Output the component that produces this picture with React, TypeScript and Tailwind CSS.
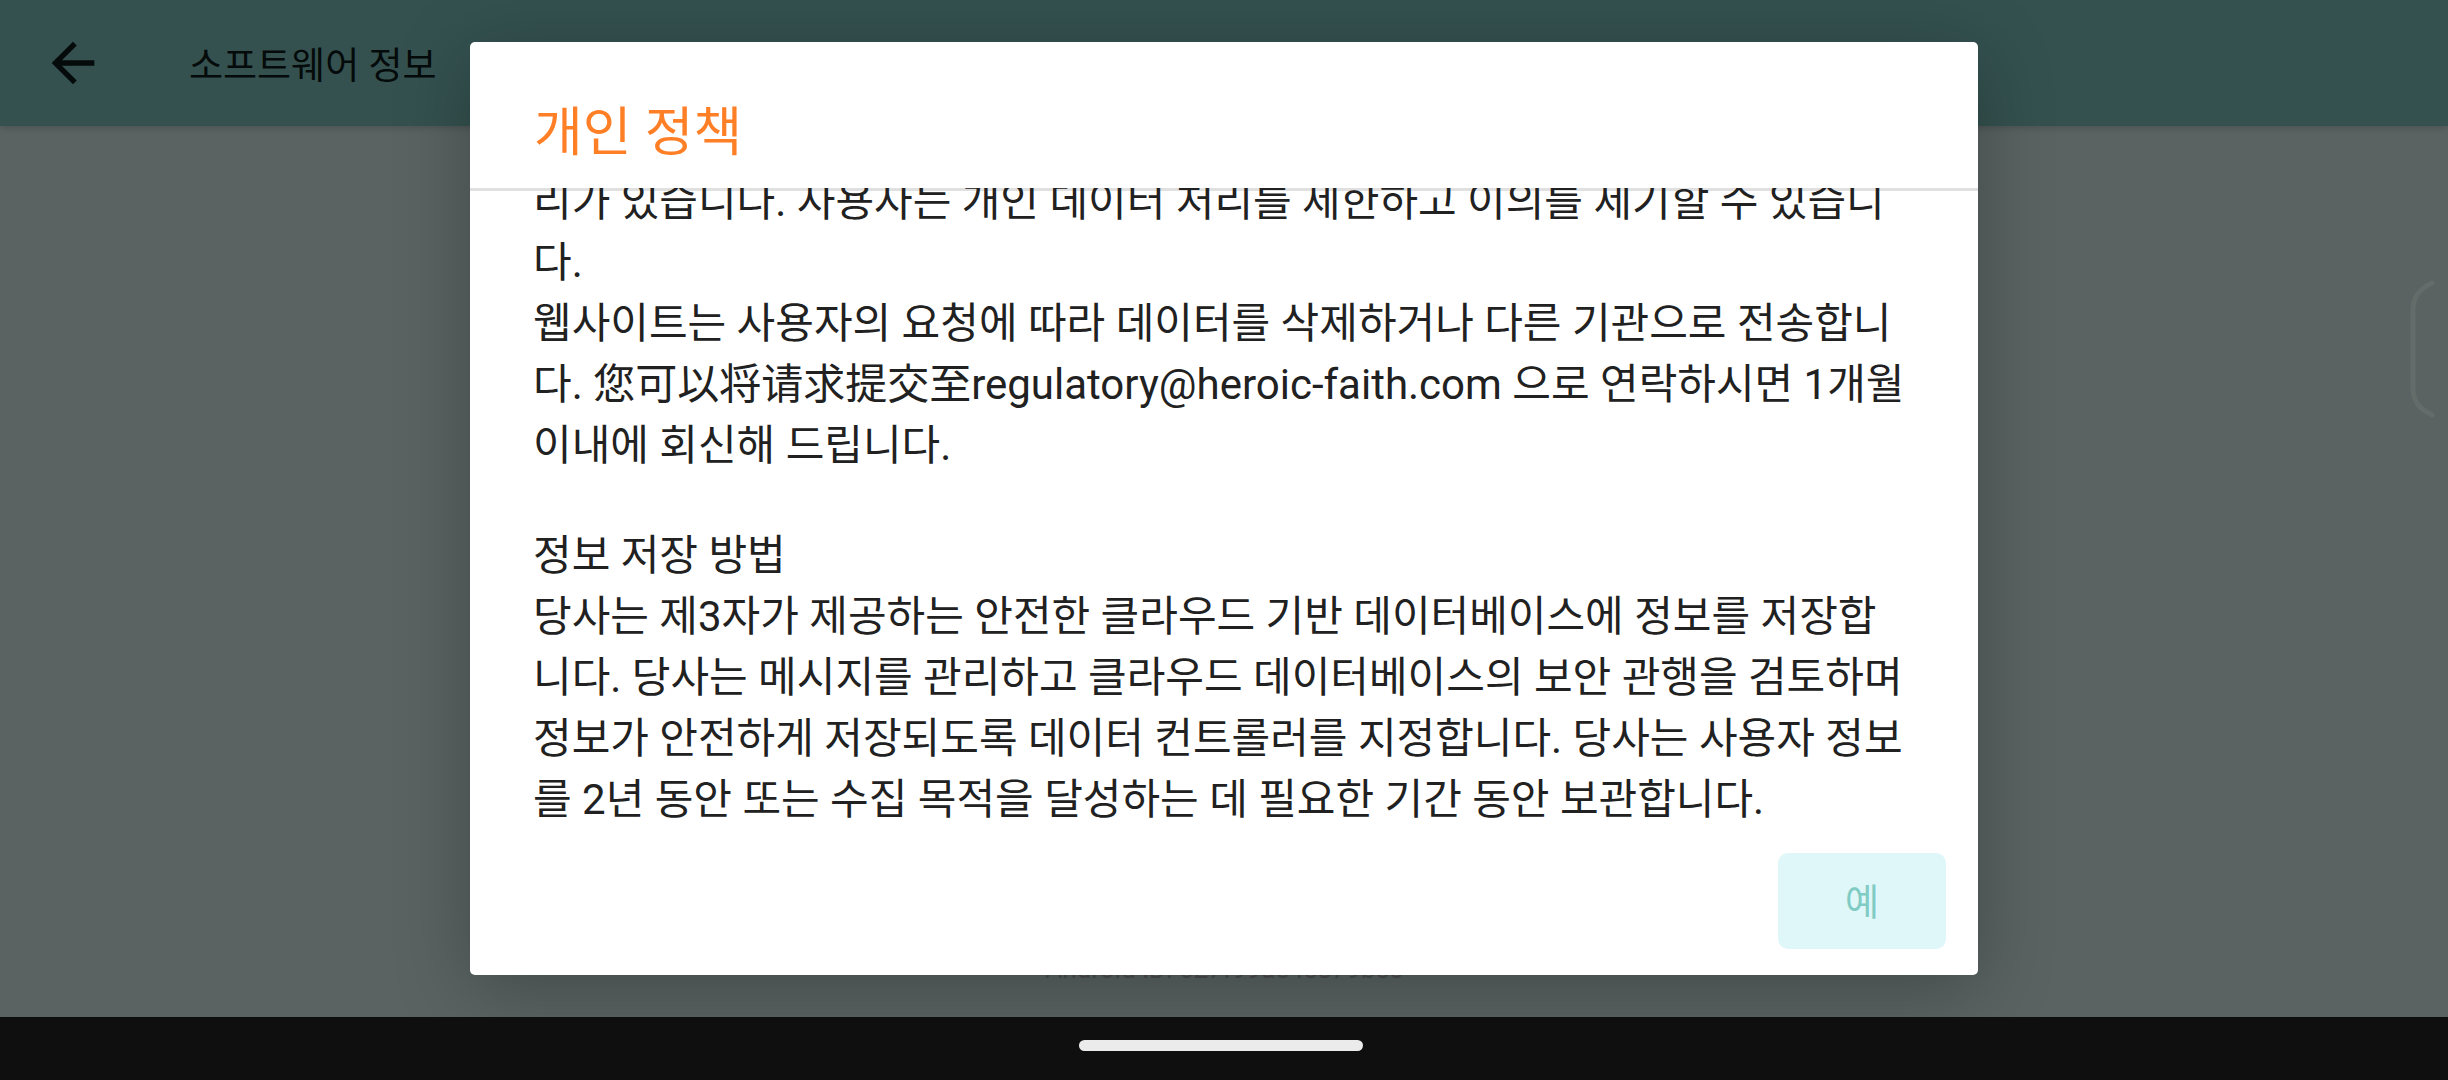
import React from "react";

const paragraphs = [
  "리가 있습니다. 사용자는 개인 데이터 처리를 제한하고 이의를 제기할 수 있습니다.",
  "웹사이트는 사용자의 요청에 따라 데이터를 삭제하거나 다른 기관으로 전송합니다. 您可以将请求提交至regulatory@heroic-faith.com 으로 연락하시면 1개월 이내에 회신해 드립니다.",
];

const storage =
  "당사는 제3자가 제공하는 안전한 클라우드 기반 데이터베이스에 정보를 저장합니다. 당사는 메시지를 관리하고 클라우드 데이터베이스의 보안 관행을 검토하며 정보가 안전하게 저장되도록 데이터 컨트롤러를 지정합니다. 당사는 사용자 정보를 2년 동안 또는 수집 목적을 달성하는 데 필요한 기간 동안 보관합니다.";

export default function App() {
  return (
    <div
      lang="ko"
      className="flex h-screen flex-col bg-[#5a6262] font-['Roboto','Noto_Sans_CJK_KR',sans-serif]"
    >
      <div className="relative flex min-h-0 flex-1 flex-col overflow-hidden">
        <header className="flex h-[126px] shrink-0 items-center bg-[#34514f] pl-[41px] text-[#050a0a] shadow-[0_1px_8px_rgba(0,0,0,0.2)]">
          <button type="button" aria-label="뒤로" className="mr-[84px] size-16">
            <svg viewBox="0 0 24 24" className="size-16" fill="currentColor" aria-hidden="true">
              <path d="M20 11H7.83l5.59-5.59L12 4l-8 8 8 8 1.41-1.41L7.83 13H20v-2z" />
            </svg>
          </button>
          <h1 className="pt-2 text-[37px]">소프트웨어 정보</h1>
        </header>
        <main className="flex flex-1 flex-col items-center justify-end pb-8">
          <p className="text-[26px] leading-8 text-[#484b4c]">Android ID: 627f99ae4c879bcc</p>
        </main>
        <svg
          className="absolute right-[12px] top-[280px] h-[138px] w-[26px]"
          viewBox="0 0 26 138"
          fill="none"
          stroke="#646c6a"
          strokeWidth="5"
          strokeLinecap="round"
          aria-hidden="true"
        >
          <path d="M22 3C10 9 3 16 3 30V108C3 122 10 129 22 135" />
        </svg>
        <div className="absolute inset-0 flex justify-center py-[42px]">
          <section
            role="dialog"
            aria-modal="true"
            aria-labelledby="policy-title"
            className="flex w-full max-w-[1508px] flex-col overflow-hidden rounded-[5px] bg-white shadow-[0_14px_75px_rgba(0,0,0,0.26)]"
          >
            <h2
              id="policy-title"
              className="h-[146px] shrink-0 px-16 pt-[53px] text-[53px] leading-[76px] text-[#ff7f27]"
            >
              개인 정책
            </h2>
            <div className="flex min-h-0 flex-1 flex-col justify-end overflow-hidden px-[63px] text-[42px] leading-[61px] text-[#212121] shadow-[inset_0_3px_0_#e0e0e0]">
              {paragraphs.map((text) => (
                <p key={text}>{text}</p>
              ))}
              <h3 className="mt-[49px]">정보 저장 방법</h3>
              <p>{storage}</p>
            </div>
            <footer className="flex shrink-0 justify-end px-8 pb-[26px] pt-[23px]">
              <button
                type="button"
                className="h-24 w-[168px] rounded-[10px] bg-[#dff7f8] pt-1.5 text-[37px] text-[#80cbc4]"
              >
                예
              </button>
            </footer>
          </section>
        </div>
      </div>
      <nav className="flex h-[63px] shrink-0 justify-center bg-[#0f0f0f] pr-1.5 pt-[23px]">
        <button type="button" aria-label="홈" className="h-[11px] w-[284px] rounded-full bg-[#ebebeb]" />
      </nav>
    </div>
  );
}
